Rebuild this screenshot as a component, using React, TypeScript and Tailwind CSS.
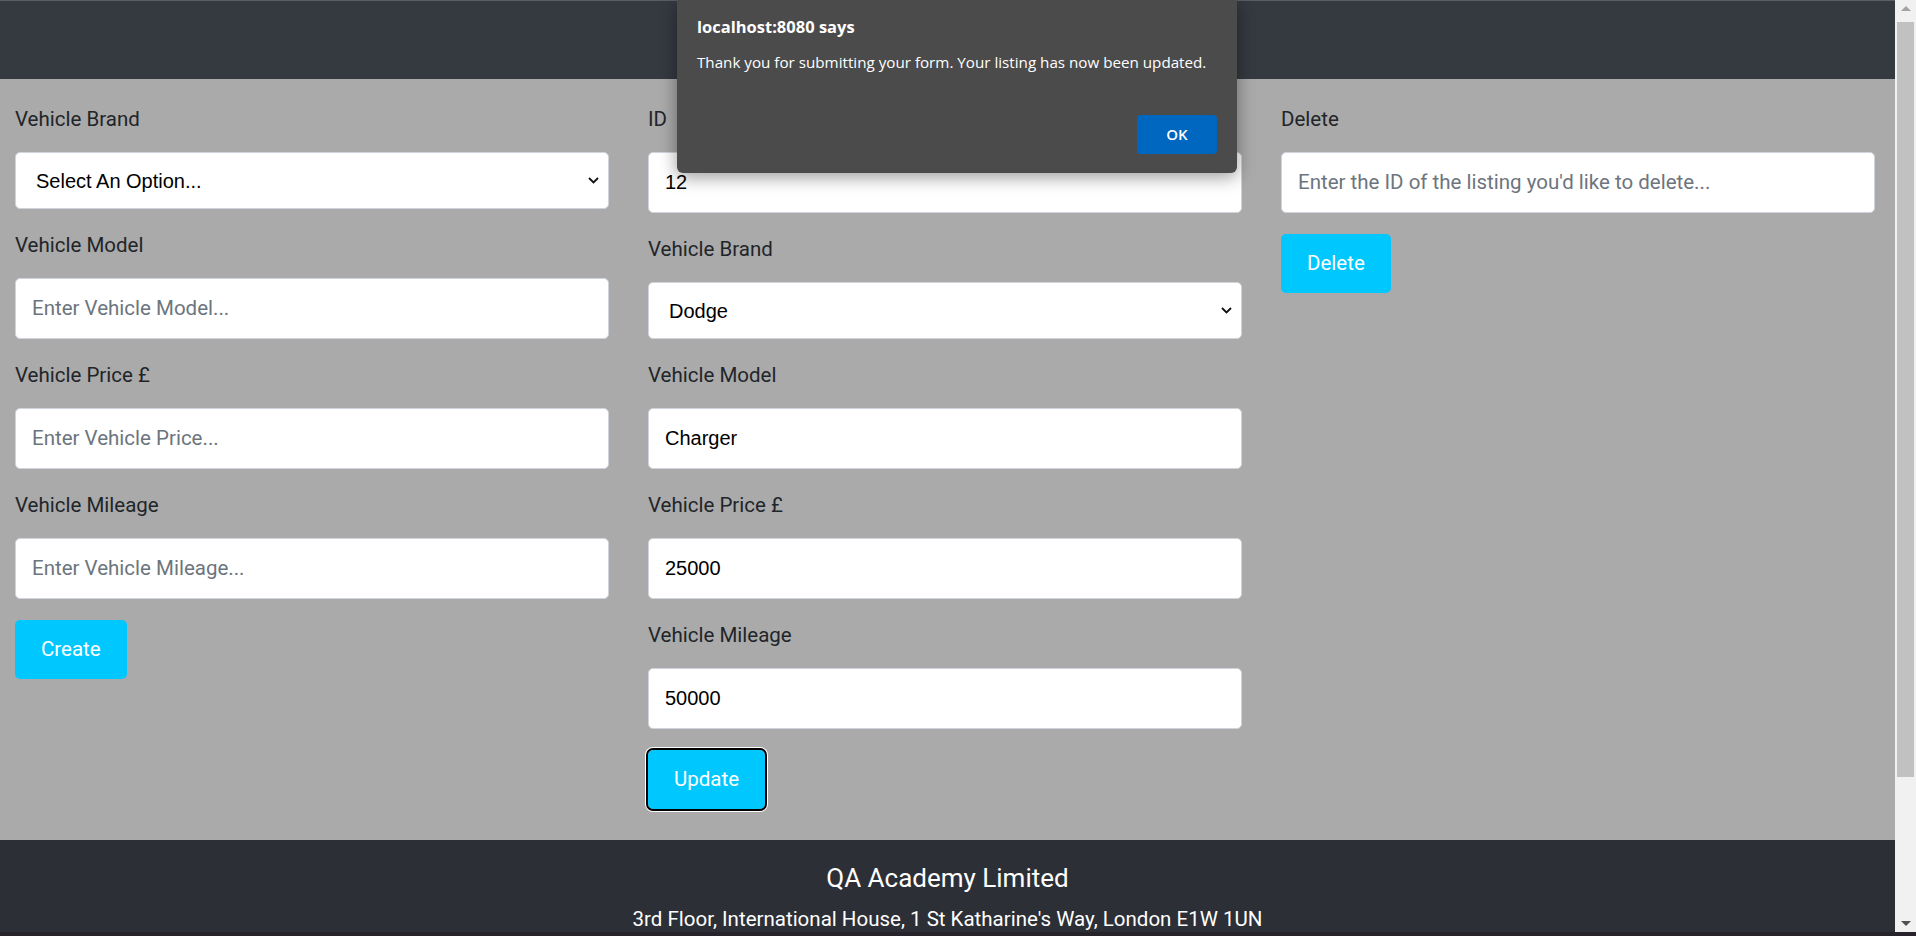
import React from "react";

type FieldProps = {
  label: string;
  value?: string;
  placeholder?: string;
  select?: boolean;
};

const labelCls = "block text-[20.5px] leading-[30px] text-[#212529] mb-[18px]";

const Chevron = () => (
  <svg width="11" height="7" viewBox="0 0 11 7" className="shrink-0">
    <path d="M1 1l4.5 4.5L10 1" fill="none" stroke="#111" strokeWidth="1.8" />
  </svg>
);

const Field = ({ label, value, placeholder, select }: FieldProps) => (
  <div className="mb-[21px]">
    <label className={labelCls}>{label}</label>
    {select ? (
      <div className="h-[57px] bg-white border border-[#ced4da] rounded-[5px] flex items-center justify-between pl-[20px] pr-[9px]">
        <span className="font-['Liberation_Sans',sans-serif] text-[20px] text-black">{value}</span>
        <Chevron />
      </div>
    ) : (
      <input
        readOnly
        defaultValue={value}
        placeholder={placeholder}
        className="block w-full h-[61px] bg-white border border-[#ced4da] rounded-[5px] px-[16px] text-[20px] text-black font-['Liberation_Sans',sans-serif] placeholder:font-[Roboto,sans-serif] placeholder:text-[20.5px] placeholder:text-[#6c757d] outline-none"
      />
    )}
  </div>
);

const Btn = ({ children, focused }: { children: React.ReactNode; focused?: boolean }) => (
  <button
    className={
      focused
        ? "h-[59px] px-[26px] rounded-[5px] bg-[#00c8ff] text-white text-[20.5px] outline-2 outline-black shadow-[0_0_0_3px_#ffffff]"
        : "h-[59px] px-[26px] rounded-[5px] bg-[#00c8ff] text-white text-[20.5px]"
    }
  >
    {children}
  </button>
);

export default function App() {
  return (
    <div className="relative h-[936px] w-full overflow-hidden flex flex-col font-[Roboto,sans-serif] bg-[#aaaaaa]">
      <div className="flex flex-1 min-h-0">
        {/* page */}
        <div className="flex-1 min-w-0 flex flex-col">
          <header className="h-[79px] shrink-0 bg-[#343a40] border-t border-[#5a5d62]" />

          <main className="h-[761px] shrink-0 bg-[#aaaaaa] pt-[25px] pl-[15px] pr-[20px] grid grid-cols-3 gap-x-[39px] items-start">
            <div>
              <Field label="Vehicle Brand" value="Select An Option..." select />
              <Field label="Vehicle Model" placeholder="Enter Vehicle Model..." />
              <Field label="Vehicle Price £" placeholder="Enter Vehicle Price..." />
              <Field label="Vehicle Mileage" placeholder="Enter Vehicle Mileage..." />
              <Btn>Create</Btn>
            </div>
            <div>
              <Field label="ID" value="12" />
              <Field label="Vehicle Brand" value="Dodge" select />
              <Field label="Vehicle Model" value="Charger" />
              <Field label="Vehicle Price £" value="25000" />
              <Field label="Vehicle Mileage" value="50000" />
              <Btn focused>Update</Btn>
            </div>
            <div>
              <Field label="Delete" placeholder="Enter the ID of the listing you'd like to delete..." />
              <Btn>Delete</Btn>
            </div>
          </main>

          <footer className="flex-1 min-h-0 overflow-hidden bg-[#2d2f36] text-white text-center pt-[20px]">
            <p className="text-[26px] leading-[36px]">QA Academy Limited</p>
            <p className="text-[20.5px] leading-[30px] mt-[8px]">3rd Floor, International House, 1 St Katharine's Way, London E1W 1UN</p>
          </footer>
        </div>

        {/* scrollbar */}
        <div className="w-[21px] shrink-0 bg-[#f1f1f1] flex flex-col items-center">
          <div className="h-[17px] flex items-center justify-center">
            <div className="w-0 h-0 border-l-[5px] border-r-[5px] border-b-[5px] border-l-transparent border-r-transparent border-b-[#a3a3a3]" />
          </div>
          <div className="mt-[5px] h-[755px] w-[17px] bg-[#c1c1c1]" />
          <div className="flex-1" />
          <div className="h-[17px] flex items-center justify-center">
            <div className="w-0 h-0 border-l-[5px] border-r-[5px] border-t-[5px] border-l-transparent border-r-transparent border-t-[#505050]" />
          </div>
        </div>
      </div>
      <div className="h-[4px] shrink-0 bg-[#26232a]" />

      {/* browser alert */}
      <div className="absolute left-[677px] top-0 w-[560px] h-[173px] bg-[#4b4b4b] rounded-b-[6px] shadow-[0_4px_18px_rgba(0,0,0,0.4)] px-[20px] pt-[16px] pb-[19px] flex flex-col font-['Open_Sans',sans-serif] text-white">
        <p className="text-[16.5px] leading-[22px] font-bold">localhost:8080 says</p>
        <p className="text-[15.2px] leading-[20px] mt-[14px]">Thank you for submitting your form. Your listing has now been updated.</p>
        <div className="mt-auto flex justify-end">
          <button className="w-[80px] h-[39px] rounded-[4px] bg-[#0067c0] text-white text-[15px] font-semibold">OK</button>
        </div>
      </div>
    </div>
  );
}
